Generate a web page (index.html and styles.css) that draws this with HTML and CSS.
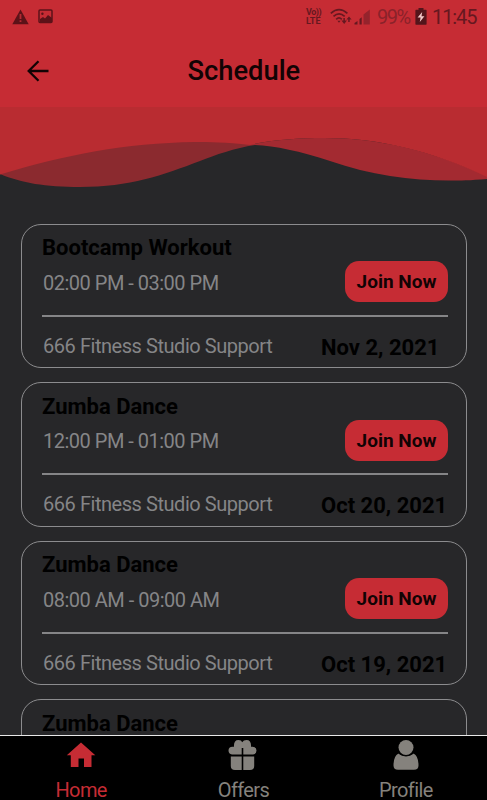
FILE: index.html
```
<!DOCTYPE html>
<html lang="en">
<head>
    <meta charset="UTF-8">
    <meta name="viewport" content="width=device-width, initial-scale=1.0">
    <title>Schedule</title>
    <link rel="stylesheet" href="styles.css">
</head>
<body>
    <div class="app">
        <header>
            <div class="statusBar">
                <svg class="warning" width="17" height="16" viewBox="0 0 17 16">
                    <path fill="#5c1218" d="M8.5 0.5L16.7 15.3H0.3z"/>
                    <path fill="#b52a33" d="M7.6 5h1.8v5H7.6zM7.6 11.3h1.8v1.8H7.6z"/>
                </svg>
                <svg class="picture" width="15" height="15" viewBox="0 0 15 15">
                    <rect x="1" y="1" width="13" height="12.5" rx="1" fill="none" stroke="#5c1218" stroke-width="1.5"/>
                    <circle cx="4.4" cy="4.8" r="1.2" fill="#5c1218"/>
                    <path fill="#5c1218" d="M2 10l3-2 2 1.5L10 6l4 3v4H2z"/>
                </svg>
                <div class="volte"><span>Vo))</span><span>LTE</span></div>
                <svg class="wifi" width="22" height="18" viewBox="0 0 22 18">
                    <g fill="none" stroke="#661820" stroke-width="1.7">
                        <path d="M0.8 5.3Q9 -2.2 17.4 5.3"/>
                        <path d="M3.5 8.4Q9 3.2 14.7 8.4"/>
                        <path d="M6.2 11.3Q9 8.6 11.8 11.3"/>
                    </g>
                    <path fill="#661820" d="M7.4 12.8h3.2L9 14.8zM11.4 12.5h2V10h1.5v2.5h2L14.2 16zM16.4 11.5L19 8.5l2.6 3h-1.9V14h-1.5v-2.5z"/>
                </svg>
                <svg class="signal" width="17" height="16" viewBox="0 0 17 16">
                    <path fill="#661820" d="M0.5 15.5v-1.5l3-2v3.5zM5.5 15.5V10l2.2-1.8v7.3z"/>
                    <path fill="#94232c" d="M9.5 15.5V5.5L15.8 0.5v15z"/>
                </svg>
                <span class="percent">99%</span>
                <svg class="battery" width="12" height="17" viewBox="0 0 12 17">
                    <path fill="#54151b" d="M3.5 0h5v1.8H11q0.6 0 0.6 0.6V16q0 0.7-0.6 0.7H1q-0.6 0-0.6-0.7V2.4q0-0.6 0.6-0.6h2.5z"/>
                    <path fill="#f3c9c9" d="M7.2 4L2.6 9.6h3L4.8 14l4.6-5.8H6.5z"/>
                </svg>
                <span class="clock">11:45</span>
            </div>
            <div class="titleBar">
                <svg class="back" width="22" height="22" viewBox="0 0 22 22">
                    <path fill="none" stroke="#120304" stroke-width="2.3" d="M21.5 11H1.8M11.5 1.2L1.7 11l9.8 9.8"/>
                </svg>
                <h1>Schedule</h1>
            </div>
        </header>
        <svg class="waves" width="487" height="82" viewBox="0 0 487 82">
            <path fill="#8b2a2f" d="M0 0H255V38C235 41 215 48 200 54C163 68 130 80 80 80C45 80 22 76 0 67z"/>
            <path fill="#a32a31" d="M250 38C270 33 297 31 325 31C377 31 430 43 487 69V72C470 73.5 460 73.5 450 73.5C410 73.5 370 68 330 54C300 44 275 39 255 38z"/>
            <path fill="#b92c31" d="M0 0H487V70C430 43 377 31 325 31C297 31 270 33 250 38C225 35 210 35 195 35C125 36 65 48 0 67.5z"/>
        </svg>
        <main>
            <div class="card">
                <div class="session">
                    <div>
                        <h2>Bootcamp Workout</h2>
                        <p>02:00 PM - 03:00 PM</p>
                    </div>
                    <button>Join Now</button>
                </div>
                <div class="details">
                    <p>666 Fitness Studio Support</p>
                    <span class="date">Nov 2, 2021</span>
                </div>
            </div>
            <div class="card">
                <div class="session">
                    <div>
                        <h2>Zumba Dance</h2>
                        <p>12:00 PM - 01:00 PM</p>
                    </div>
                    <button>Join Now</button>
                </div>
                <div class="details">
                    <p>666 Fitness Studio Support</p>
                    <span class="date">Oct 20, 2021</span>
                </div>
            </div>
            <div class="card">
                <div class="session">
                    <div>
                        <h2>Zumba Dance</h2>
                        <p>08:00 AM - 09:00 AM</p>
                    </div>
                    <button>Join Now</button>
                </div>
                <div class="details">
                    <p>666 Fitness Studio Support</p>
                    <span class="date">Oct 19, 2021</span>
                </div>
            </div>
            <div class="card">
                <div class="session">
                    <div>
                        <h2>Zumba Dance</h2>
                    </div>
                </div>
            </div>
        </main>
        <nav>
            <a class="tab active">
                <svg width="30" height="32" viewBox="0 0 30 32">
                    <path fill="currentColor" d="M15 3.5L29.3 16.2H25.5V28H18V19.5H12.5V28H4.8V16.2H0.8z"/>
                </svg>
                <span>Home</span>
            </a>
            <a class="tab">
                <svg width="30" height="32" viewBox="0 0 30 32">
                    <path fill="currentColor" d="M4 15.5Q0.5 15 0.5 11.5T4.5 7.8H6Q5.5 1 10.5 1Q13.5 1 14.2 3.2Q15.500 1 18.5 1Q23.5 1 23 7.8H24.5Q28.5 8 28.5 11.5T25 15.5H15.3V9H13.7V15.5zM2.8 17.5H13.7V31H7Q2.8 31 2.8 27zM15.3 17.5H26.2V27Q26.2 31 22 31H15.3z"/>
                </svg>
                <span>Offers</span>
            </a>
            <a class="tab">
                <svg width="30" height="32" viewBox="0 0 30 32">
                    <circle cx="15" cy="8.5" r="7.5" fill="currentColor"/>
                    <path fill="currentColor" d="M7.5 14.5Q15 19.5 22.5 14.5Q27.5 17 27.5 26.5Q27.5 30.7 23 30.7H7Q2.5 30.7 2.5 26.5Q2.5 17 7.5 14.5z"/>
                    <path fill="none" stroke="#000" stroke-width="1" d="M7.5 14.2Q15 19.8 22.5 14.2"/>
                </svg>
                <span>Profile</span>
            </a>
        </nav>
    </div>
</body>
</html>
```
FILE: styles.css
```
*{
    margin: 0;
    padding: 0;
    box-sizing: border-box;
}
body{
    background-color: #272729;
    font-family: Roboto, "Liberation Sans", sans-serif;
}
svg{
    display: block;
    flex-shrink: 0;
}
.app{
    height: 800px;
    overflow: hidden;
    display: flex;
    flex-direction: column;
}
header{
    height: 107px;
    flex-shrink: 0;
    background-color: #c62c34;
}
.statusBar{
    height: 33px;
    display: flex;
    align-items: center;
    padding: 0 10px 0 12px;
    color: #661820;
}
.picture{
    margin-left: 9px;
}
.volte{
    display: flex;
    flex-direction: column;
    width: 18px;
    margin-left: auto;
    font-size: 9px;
    line-height: 9px;
    font-weight: 700;
    white-space: nowrap;
}
.volte span:first-child{
    letter-spacing: -0.5px;
}
.wifi{
    margin-left: 6px;
}
.signal{
    margin-left: 2px;
}
.percent{
    font-size: 20px;
    width: 33px;
    margin-left: 6px;
    color: #8b222a;
    letter-spacing: -1.5px;
}
.battery{
    margin-left: 5px;
}
.clock{
    font-size: 20px;
    width: 45px;
    margin-left: 5px;
    letter-spacing: -1.1px;
}
.titleBar{
    height: 75px;
    display: flex;
    align-items: center;
    padding-left: 27px;
}
h1{
    margin-left: 138.5px;
    font-size: 27.3px;
    font-weight: 500;
    color: #120304;
}
main{
    flex: 1;
    min-height: 0;
    overflow: hidden;
    padding: 34.5px 20px 0 21px;
}
.card{
    height: 144.5px;
    margin-bottom: 14px;
    padding: 0 18px 0 20px;
    border: 1.5px solid #8c8c8e;
    border-radius: 20px;
}
.session{
    height: 92px;
    display: flex;
    justify-content: space-between;
    border-bottom: 2px solid #858587;
}
h2{
    padding-top: 9.5px;
    font-size: 22px;
    line-height: 27px;
    font-weight: 700;
    color: #000;
}
.card p{
    padding-left: 1px;
    font-size: 20px;
    line-height: 24px;
    letter-spacing: -0.45px;
    color: #858587;
    white-space: nowrap;
}
.card .session p{
    margin-top: 9.5px;
    letter-spacing: -0.5px;
}
button{
    width: 103px;
    height: 41px;
    margin-top: 36.5px;
    border: 0;
    border-radius: 14px;
    background-color: #c62c34;
    color: #120304;
    font-family: inherit;
    font-size: 19px;
    font-weight: 700;
    white-space: nowrap;
}
.details{
    display: flex;
    justify-content: space-between;
    padding-top: 17px;
}
.date{
    width: 127px;
    margin-top: 1px;
    font-size: 22px;
    line-height: 26px;
    font-weight: 700;
    color: #000;
    white-space: nowrap;
}
nav{
    height: 65px;
    flex-shrink: 0;
    display: flex;
    background-color: #000;
    border-top: 1px solid #e8e8e8;
}
.tab{
    flex: 1;
    display: flex;
    flex-direction: column;
    align-items: center;
    padding-top: 3px;
    font-size: 20px;
    line-height: 20px;
    letter-spacing: -0.6px;
    color: #85827d;
}
.tab span{
    margin-top: 9px;
}
.active{
    color: #c62c34;
}
```
